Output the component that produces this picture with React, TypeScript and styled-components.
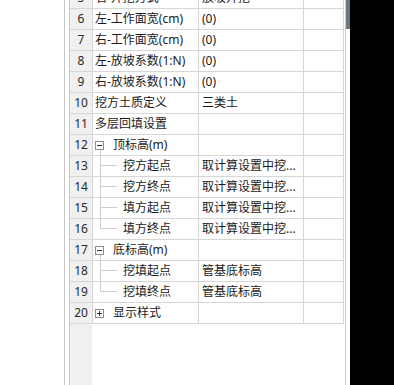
import styled, { createGlobalStyle, css } from "styled-components";

const GlobalStyle = createGlobalStyle`
  html, body {
    margin: 0;
    padding: 0;
    background: #fff;
  }
  body {
    font-family: "Noto Sans", "Noto Sans CJK SC", sans-serif;
    font-size: 12px;
    color: #1a1a1a;
  }
`;

type Kind = "plain" | "group" | "child" | "last";

interface RowData {
  no: number;
  name: string;
  value?: string;
  kind?: Kind;
  open?: boolean;
}

const rows: RowData[] = [
  { no: 5, name: "右-开挖方式", value: "放坡开挖" },
  { no: 6, name: "左-工作面宽(cm)", value: "(0)" },
  { no: 7, name: "右-工作面宽(cm)", value: "(0)" },
  { no: 8, name: "左-放坡系数(1:N)", value: "(0)" },
  { no: 9, name: "右-放坡系数(1:N)", value: "(0)" },
  { no: 10, name: "挖方土质定义", value: "三类土" },
  { no: 11, name: "多层回填设置" },
  { no: 12, name: "顶标高(m)", kind: "group", open: true },
  { no: 13, name: "挖方起点", value: "取计算设置中挖...", kind: "child" },
  { no: 14, name: "挖方终点", value: "取计算设置中挖...", kind: "child" },
  { no: 15, name: "填方起点", value: "取计算设置中挖...", kind: "child" },
  { no: 16, name: "填方终点", value: "取计算设置中挖...", kind: "last" },
  { no: 17, name: "底标高(m)", kind: "group", open: true },
  { no: 18, name: "挖填起点", value: "管基底标高", kind: "child" },
  { no: 19, name: "挖填终点", value: "管基底标高", kind: "last" },
  { no: 20, name: "显示样式", kind: "group", open: false },
];

const GRID = "#d6d6d6";
const EDGE = "#c8c8c8";
const TREE = "#cdcdcd";

const Page = styled.div`
  display: flex;
  width: 394px;
  height: 385px;
  overflow: hidden;
`;

const LeftMargin = styled.div`
  width: 64px;
  flex: none;
`;

const Frame = styled.div`
  display: flex;
  flex: none;
  border-left: 1px solid ${EDGE};
  padding-left: 4px;
`;

const Sheet = styled.div`
  width: 275px;
  border-left: 1px solid ${EDGE};
  background: linear-gradient(to right, #f0f0f0 22px, #fff 22px);
  overflow: hidden;
`;

const Rows = styled.div`
  margin-top: -12px;
`;

const Row = styled.div`
  display: grid;
  grid-template-columns: 23px 106px 105px 40px;
  height: 21px;
`;

const Cell = styled.div`
  box-sizing: border-box;
  border-right: 1px solid ${GRID};
  border-bottom: 1px solid ${GRID};
  background: #fff;
  display: flex;
  align-items: center;
  white-space: nowrap;
  overflow: hidden;
  line-height: 20px;
`;

const NumCell = styled(Cell)`
  background: #f0f0f0;
  justify-content: center;
  color: #2a2a2a;
`;

const NameCell = styled(Cell)<{ $kind: Kind; $open?: boolean }>`
  position: relative;
  padding-left: 2px;

  ${({ $kind }) =>
    ($kind === "child" || $kind === "last") &&
    css`
      padding-left: 30px;
      &::before {
        content: "";
        position: absolute;
        left: 7px;
        top: 0;
        width: 1px;
        height: ${$kind === "last" ? "10px" : "100%"};
        background: ${TREE};
      }
      &::after {
        content: "";
        position: absolute;
        left: 7px;
        top: 9px;
        width: 17px;
        height: 1px;
        background: ${TREE};
      }
    `}

  ${({ $kind, $open }) =>
    $kind === "group" &&
    $open &&
    css`
      &::before {
        content: "";
        position: absolute;
        left: 7px;
        top: 15px;
        bottom: 0;
        width: 1px;
        background: ${TREE};
      }
    `}
`;

const ValueCell = styled(Cell)`
  padding-left: 3px;
`;

const Toggle = styled.span<{ $open: boolean }>`
  position: relative;
  box-sizing: border-box;
  width: 9px;
  height: 9px;
  flex: none;
  margin-right: 9px;
  border: 1px solid #8c8c8c;
  background: #fff;

  &::before {
    content: "";
    position: absolute;
    left: 1px;
    top: 3px;
    width: 5px;
    height: 1px;
    background: #333;
  }

  ${({ $open }) =>
    !$open &&
    css`
      &::after {
        content: "";
        position: absolute;
        left: 3px;
        top: 1px;
        width: 1px;
        height: 5px;
        background: #333;
      }
    `}
`;

const ScrollTrack = styled.div`
  width: 4px;
  flex: none;
  margin-left: 0;
  border-left: 1px solid ${EDGE};
  background: #fff;
`;

const Thumb = styled.div`
  height: 29px;
  background: #6e7681;
`;

const Outside = styled.div`
  flex: 1;
  background: #000;
`;

export default function App() {
  return (
    <>
      <GlobalStyle />
      <Page>
        <LeftMargin />
        <Frame>
          <Sheet>
            <Rows>
              {rows.map((r) => {
                const kind = r.kind ?? "plain";
                return (
                  <Row key={r.no}>
                    <NumCell>{r.no}</NumCell>
                    <NameCell $kind={kind} $open={r.open}>
                      {kind === "group" && <Toggle $open={!!r.open} />}
                      {r.name}
                    </NameCell>
                    <ValueCell>{r.value}</ValueCell>
                    <Cell />
                  </Row>
                );
              })}
            </Rows>
          </Sheet>
          <ScrollTrack>
            <Thumb />
          </ScrollTrack>
        </Frame>
        <Outside />
      </Page>
    </>
  );
}
